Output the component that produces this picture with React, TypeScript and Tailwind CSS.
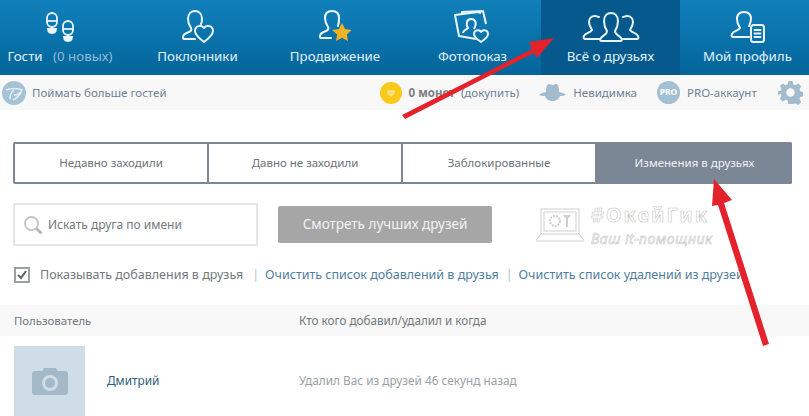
import type { ReactNode } from 'react'

function NavItem({ label, icon, active, className = '' }: { label: ReactNode; icon: ReactNode; active?: boolean; className?: string }) {
  return (
    <div className={`flex flex-col items-center shrink-0 h-full pt-[9px] ${active ? 'bg-[#05598c]' : ''} ${className}`}>
      <div className="h-[36px] flex items-center justify-center">{icon}</div>
      <div className="mt-[2px] text-[13.3px] leading-[18px] text-[#e3f3fb] whitespace-nowrap">{label}</div>
    </div>
  )
}

function Bust({ d }: { d: string }) {
  return <path d={d} fill="none" stroke="#e8f6fc" strokeWidth="2" strokeLinecap="round" strokeLinejoin="round" />
}

function Tab({ label, active }: { label: string; active?: boolean }) {
  return (
    <div className={`flex items-center justify-center text-[11.5px] ${active ? 'flex-1 bg-[#7b8794] text-[#eef1f4] -my-[2px] -mr-[2px] rounded-r-[2px]' : 'w-[194px] border-r-2 border-[#7b8794] text-[#6c7278]'}`}>
      {label}
    </div>
  )
}

export default function App() {
  return (
    <div className="relative w-[809px] h-[416px] overflow-hidden bg-white font-['Noto_Sans','Open_Sans',sans-serif]">
      <nav className="flex h-[75px] bg-gradient-to-b from-[#1180bb] to-[#04659b]">
        <NavItem
          className="w-[129px] pr-[9px]"
          label={<span>Гости <span className="text-[#8fbbd4] ml-[7px]">(0 новых)</span></span>}
          icon={
            <svg width="30" height="30" viewBox="0 0 30 30" fill="none" stroke="#e8f6fc" strokeWidth="1.8">
              <rect x="2" y="1" width="10" height="14" rx="5" />
              <path d="M2 9h10" />
              <path d="M3 17h8c0 3-1.5 4-4 4s-4-1-4-4z" fill="#e8f6fc" />
              <rect x="18" y="9" width="10" height="14" rx="5" />
              <path d="M18 17h10" />
              <path d="M19 25h8c0 3-1.5 4-4 4s-4-1-4-4z" fill="#e8f6fc" />
            </svg>
          }
        />
        <NavItem
          className="w-[137px]"
          label="Поклонники"
          icon={
            <svg width="34" height="34" viewBox="0 0 34 34">
              <Bust d="M14 29H3c-1 0-1-1-1-2 0-3 3-4 6-5 2-1 3-2 2-4-2-3-3-6-3-9 0-5 3-8 7-8s7 3 7 8c0 2 0 3-1 5" />
              <path d="M23 32c-4-3-9-7-9-11 0-5 6-7 9-3 3-4 9-2 9 3 0 4-5 8-9 11z" fill="none" stroke="#e8f6fc" strokeWidth="2" strokeLinejoin="round" />
            </svg>
          }
        />
        <NavItem
          className="w-[138px]"
          label="Продвижение"
          icon={
            <svg width="34" height="34" viewBox="0 0 34 34">
              <Bust d="M13 28H3c-1 0-1-1-1-2 0-3 3-4 6-5 2-1 3-2 2-4-2-3-3-6-3-9 0-5 3-7 7-7s7 2 7 7c0 3 0 5-1 8" />
              <path d="M24 13l3 6 6.500 1-4.700 4.500 1.200 6.500-6-3.200-6 3.200 1.200-6.500L14 20l7-1z" fill="#f5b324" />
            </svg>
          }
        />
        <NavItem
          className="w-[137px]"
          label="Фотопоказ"
          icon={
            <svg width="38" height="36" viewBox="0 0 38 36" fill="none" stroke="#e8f6fc" strokeWidth="2" strokeLinejoin="round">
              <path d="M22 30L5 27 1 6l23-3 3 1" />
              <path d="M8 6V3l21-1 3 13" />
              <path d="M9 24c0-3 3-3 5-5-2-3-2-9 3-9s6 5 3 10" />
              <path d="M27 33c-3-2-7-5-7-8 0-4 5-5 7-2 2-3 7-2 7 2 0 3-4 6-7 8z" />
            </svg>
          }
        />
        <NavItem
          active
          className="w-[139px]"
          label="Всё о друзьях"
          icon={
            <svg width="58" height="32" viewBox="0 0 58 32" fill="none" stroke="#e8f6fc" strokeWidth="2" strokeLinejoin="round" strokeLinecap="round">
              <path d="M18 28H3c-1 0-2-1-1-3 1-3 6-3 8-6-2-3-3-5-3-8 0-3 2-6 6-6 2 0 3 1 4 1" />
              <path d="M40 28h15c1 0 2-1 1-3-1-3-6-3-8-6 2-3 3-5 3-8 0-3-2-6-6-6-2 0-3 1-4 1" />
              <path d="M19 30h20c1 0 1-2 0-3-2-3-6-3-6-7 2-3 3-5 3-10 0-5-3-8-7-8s-7 3-7 8c0 5 1 7 3 10 0 4-4 4-6 7-1 1-1 3 0 3z" />
            </svg>
          }
        />
        <NavItem
          className="w-[134px] pl-[1px]"
          label="Мой профиль"
          icon={
            <svg width="36" height="34" viewBox="0 0 36 34" fill="none" stroke="#e8f6fc" strokeWidth="2" strokeLinejoin="round" strokeLinecap="round">
              <path d="M19 27H3c-1 0-2-1-1-3 1-3 6-3 8-6-2-3-3-5-3-9 0-5 3-7 7-7s7 2 7 7c0 3-1 5-2 7" />
              <rect x="21" y="15" width="13" height="17" rx="2.500" />
              <path d="M24.500 20h6M24.500 23.500h6M24.500 27h6" />
            </svg>
          }
        />
      </nav>

      <div className="flex items-center h-[35px] bg-[#f8f8f8] text-[11.5px] text-[#6d8296]">
        <svg className="ml-[2px]" width="24" height="24" viewBox="0 0 24 24">
          <circle cx="12" cy="12" r="12" fill="#a5c2d6" />
          <path d="M4 9c5-2 12-2 16 0-2 5-5 8-9 10M8 18c0-4 1-7 4-9M12 14c3 0 5-1 7-3" fill="none" stroke="#e8f0f5" strokeWidth="1.500" />
        </svg>
        <span className="ml-[6px]">Поймать больше гостей</span>

        <svg className="ml-[213px]" width="22" height="22" viewBox="0 0 22 22">
          <circle cx="11" cy="11" r="11" fill="#fbc91a" />
          <path d="M11 15c-2-1.500-4-3-4-5 0-2.500 3-3 4-1.500 1-1.500 4-1 4 1.500 0 2-2 3.500-4 5z" fill="#f9e07a" />
        </svg>
        <span className="ml-[7px] font-bold text-[#7b7f82] whitespace-nowrap">0 монет</span>
        <span className="ml-[6px] whitespace-nowrap">(докупить)</span>

        <svg className="ml-[20px]" width="27" height="20" viewBox="0 0 27 20">
          <path d="M7 9c0-5 1-8 3-8 1 0 2 1 3.500 1S16 1 17 1c2 0 3 3 3 8 3 .5 6 1.500 7 3-3 1-5 1-6 1-1 3-4 5-7.500 5S7 16 6 13c-1 0-3 0-6-1 1-1.500 4-2.500 7-3z" fill="#a3bccd" />
        </svg>
        <span className="ml-[7px]">Невидимка</span>

        <div className="ml-[20px] w-[23px] h-[23px] rounded-full bg-[#a3bfd3] flex items-center justify-center text-[8.5px] font-bold text-white">PRO</div>
        <span className="ml-[7px] whitespace-nowrap">PRO-аккаунт</span>

        <svg className="ml-[21px] shrink-0" width="25" height="25" viewBox="0 0 24 24" fill="#a3bccd">
          <path fillRule="evenodd" d="M10 1h4l.7 3.200 2 .8L19.500 3.300l2.800 2.800-1.700 2.800.8 2 3.200.7v4l-3.200.7-.8 2 1.700 2.800-2.800 2.800-2.800-1.700-2 .8L14 23h-4l-.7-3.200-2-.8-2.800 1.700-2.800-2.800 1.700-2.800-.8-2L-.6 15v-4l3.200-.7.8-2L1.700 5.500l2.800-2.200 2.800 1.700 2-.8zM12 8a4 4 0 100 8 4 4 0 000-8z" />
        </svg>
      </div>

      <div className="flex h-[42px] ml-[13px] mt-[32px] w-[779px] border-2 border-[#7b8794] rounded-[2px]">
        <Tab label="Недавно заходили" />
        <Tab label="Давно не заходили" />
        <Tab label="Заблокированные" />
        <Tab label="Изменения в друзьях" active />
      </div>

      <div className="flex items-center h-[43px] ml-[13px] mt-[19px]">
        <div className="flex items-center w-[245px] h-[43px] border-2 border-[#e6e6e6] px-[7px] text-[12px] text-[#74797d]">
          <svg width="22" height="22" viewBox="0 0 22 22" fill="none">
            <circle cx="9.500" cy="9.500" r="6.500" stroke="#c4c8ca" strokeWidth="2" />
            <path d="M14.500 14.500l5 5" stroke="#b5b8ba" strokeWidth="3" />
          </svg>
          <span className="ml-[4px]">Искать друга по имени</span>
        </div>
        <div className="ml-[20px] w-[214px] h-[37px] rounded-[2px] bg-[#a6a6a6] flex items-center justify-center text-[13.5px] text-[#f2f2f2]">
          Смотреть лучших друзей
        </div>
        <div className="ml-[43px] flex items-center gap-[6px]">
          <svg width="50" height="36" viewBox="0 0 50 36" fill="none" stroke="#cfcfcf" strokeWidth="1">
            <rect x="6" y="2" width="38" height="25" />
            <rect x="9" y="5" width="32" height="19" />
            <circle cx="20" cy="14" r="5" strokeDasharray="2 1" strokeWidth="2" />
            <path d="M32 8v12M29 8l3 3 3-3" strokeWidth="2" />
            <path d="M6 27L1 33c0 1 1 1 2 1h44c1 0 2 0 2-1l-5-6" />
          </svg>
          <div className="flex flex-col text-transparent [-webkit-text-stroke:0.6px_#c8c8c8]">
            <span className="text-[20px] leading-[28px] tracking-[2px] font-bold whitespace-nowrap">#ОкейГик</span>
            <span className="text-[14px] leading-[20px] tracking-[0.5px] italic whitespace-nowrap">Ваш it-помощник</span>
          </div>
        </div>
      </div>

      <div className="flex items-center ml-[14px] mt-[19px] h-[20px] text-[12.5px] whitespace-nowrap text-[#4f7e9f]">
        <div className="w-[16px] h-[16px] shrink-0 border-2 border-[#9aa2a8] flex items-center justify-center">
          <svg width="10" height="10" viewBox="0 0 10 10" fill="none">
            <path d="M1 5l3 3 5-7" stroke="#5c6368" strokeWidth="2" />
          </svg>
        </div>
        <span className="ml-[10px] text-[#717a80]">Показывать добавления в друзья</span>
        <span className="ml-[9px] mr-[6px] text-[#b5c2cc]">|</span>
        <span>Очистить список добавлений в друзья</span>
        <span className="ml-[7px] mr-[6px] text-[#b5c2cc]">|</span>
        <span>Очистить список удалений из друзей</span>
      </div>

      <div className="flex items-center h-[31px] mt-[20px] bg-[#f8f8f8] pl-[14px] text-[11.7px] text-[#71777c]">
        <span className="w-[285px] text-[11.4px]">Пользователь</span>
        <span>Кто кого добавил/удалил и когда</span>
      </div>

      <div className="flex items-start h-[80px] pl-[14px] pt-[10px] text-[11.8px] leading-[16px]">
        <div className="w-[71px] h-[70px] bg-[#cfdde6] shrink-0 flex items-center justify-center">
          <svg width="36" height="28" viewBox="0 0 36 28">
            <path fillRule="evenodd" d="M3 4h7l2-3h12l2 3h7c2 0 3 1 3 3v18c0 2-1 3-3 3H3c-2 0-3-1-3-3V7c0-2 1-3 3-3zm15 4a8 8 0 100 16 8 8 0 000-16z" fill="#a3b9c7" />
            <circle cx="18" cy="16" r="5" fill="#a3b9c7" />
          </svg>
        </div>
        <span className="ml-[22px] w-[192px] mt-[26px] text-[#2f5d7c]">Дмитрий</span>
        <span className="mt-[26px] text-[#9ba1a5]">Удалил Вас из друзей 46 секунд назад</span>
      </div>

      {/* red arrows of the annotation */}
      <svg className="absolute inset-0 pointer-events-none" width="809" height="416" viewBox="0 0 809 416" fill="#e3222b">
        <path d="M402 115L532 49 529 42 554 38 537 58 534 53 405 119z" />
        <path d="M714 179L732 200 724 203 769 344 763 346 718 205 712 206z" />
      </svg>
    </div>
  )
}
